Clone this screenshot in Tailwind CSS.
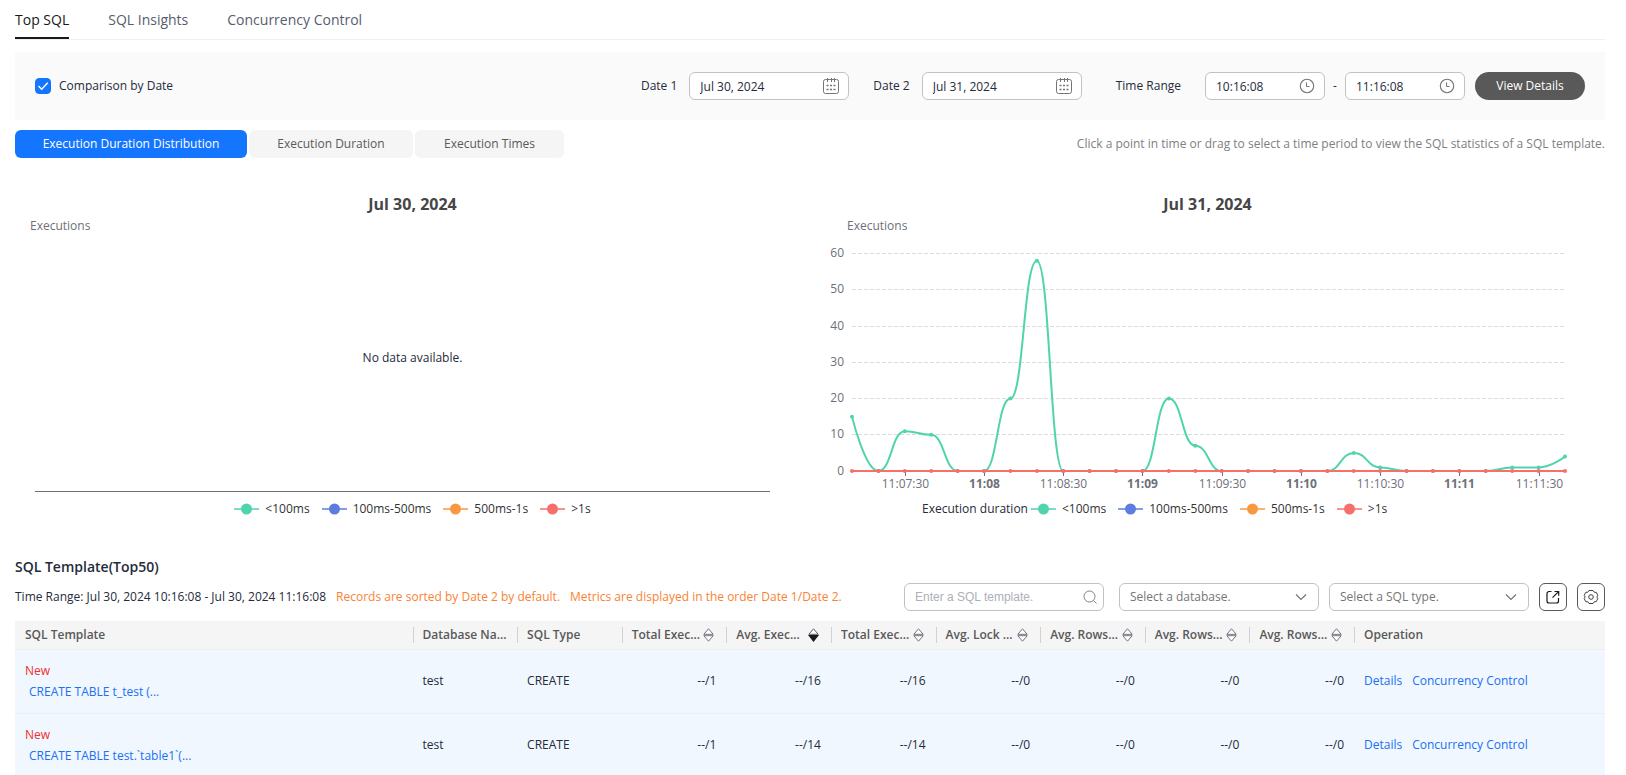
<!DOCTYPE html>
<html lang="en">

<head>
    <meta charset="utf-8">
    <meta name="viewport" content="width=device-width, initial-scale=1.0">
    <title>Top SQL</title>
    <script src="https://cdn.jsdelivr.net/npm/@tailwindcss/browser@4"></script>
</head>

<body class="bg-white pl-[15px] pr-[21px] font-['Open_Sans','Noto_Sans',sans-serif] text-xs text-[#252b3a]">

    <!-- icons -->
    <svg class="hidden">
        <symbol id="i-calendar" viewBox="0 0 16 16" fill="none" stroke="currentColor">
            <rect x="0.5" y="1.5" width="15" height="14" rx="2" />
            <path d="M4.500 0v4M8.500 0v4M11.500 0v4" />
            <path d="M3.500 7.500h2M7 7.500h2M10.500 7.500h2M3.500 11.500h2M7 11.500h2M10.500 11.500h2" stroke-width="1.300" />
        </symbol>
        <symbol id="i-clock" viewBox="0 0 16 16" fill="none" stroke="currentColor">
            <circle cx="8" cy="8" r="6.700" stroke-width="1.100" />
            <path d="M7.500 4.500v4h3" />
        </symbol>
        <symbol id="i-chevron" viewBox="0 0 12 8" fill="none" stroke="currentColor">
            <path d="M1 1.500l5 5 5-5" stroke-width="1.200" />
        </symbol>
        <symbol id="i-sort" viewBox="0 0 11 14">
            <path d="M5.500 .8L10.200 6.300H.8zM5.500 13.200L10.200 7.700H.8z" fill="#fff" stroke="#71757f" />
        </symbol>
        <symbol id="i-sort-desc" viewBox="0 0 11 14">
            <path d="M5.500 .8L10.200 6.300H.8z" fill="#fff" stroke="#575d6c" />
            <path d="M5.500 14L11 7H0z" fill="#191919" />
        </symbol>
    </svg>

    <nav class="flex h-10 gap-[39px] border-b border-[#f0f0f0] text-sm text-[#575d6c]">
        <a href="#" class="flex h-[39px] items-center border-b-2 border-[#191919] pt-0.5 text-[#191919]">Top SQL</a>
        <a href="#" class="flex h-[39px] items-center">SQL Insights</a>
        <a href="#" class="flex h-[39px] items-center">Concurrency Control</a>
    </nav>

    <!-- filter bar -->
    <form class="mt-3 flex h-[68px] items-center bg-[#fafafa] px-5">
        <label class="flex items-center gap-2">
            <span class="relative flex size-4">
                <input type="checkbox" checked class="size-4 appearance-none rounded border border-[#c2c2c2] checked:border-[#1476ff] checked:bg-[#1476ff]">
                <svg class="pointer-events-none absolute inset-0" viewBox="0 0 16 16" fill="none" stroke="#fff" stroke-width="1.4"><path d="M3.5 8l3.2 3.2 6-6.4" /></svg>
            </span>
            Comparison by Date
        </label>

        <div class="ml-auto flex items-center">
            <label for="date1" class="mr-3">Date 1</label>
            <span class="relative">
                <input id="date1" type="text" value="Jul 30, 2024" class="h-7 w-40 rounded-md border border-[#c2c2c2] bg-white px-2.5">
                <svg class="absolute top-1.5 right-2.5 size-4 text-[#757575]"><use href="#i-calendar" /></svg>
            </span>
            <label for="date2" class="mr-3 ml-6">Date 2</label>
            <span class="relative">
                <input id="date2" type="text" value="Jul 31, 2024" class="h-7 w-40 rounded-md border border-[#c2c2c2] bg-white px-2.5">
                <svg class="absolute top-1.5 right-2.5 size-4 text-[#757575]"><use href="#i-calendar" /></svg>
            </span>
            <label for="from" class="mr-6 ml-[34px]">Time Range</label>
            <span class="relative">
                <input id="from" type="text" value="10:16:08" class="h-7 w-[120px] rounded-md border border-[#c2c2c2] bg-white px-2.5">
                <svg class="absolute top-1.5 right-2.5 size-4 text-[#757575]"><use href="#i-clock" /></svg>
            </span>
            <span class="w-5 text-center">-</span>
            <span class="relative">
                <input id="to" aria-label="End time" type="text" value="11:16:08" class="h-7 w-[120px] rounded-md border border-[#c2c2c2] bg-white px-2.5">
                <svg class="absolute top-1.5 right-2.5 size-4 text-[#757575]"><use href="#i-clock" /></svg>
            </span>
            <button type="button" class="ml-2.5 h-7 w-[110px] rounded-full bg-[#595959] text-white">View Details</button>
        </div>
    </form>

    <div class="mt-2.5 flex items-center gap-0.5">
        <button class="h-7 w-[232px] rounded-md bg-[#1476ff] text-white">Execution Duration Distribution</button>
        <button class="h-7 w-[164px] rounded-md bg-[#f5f5f5] text-[#595959]">Execution Duration</button>
        <button class="h-7 w-[149px] rounded-md bg-[#f5f5f5] text-[#595959]">Execution Times</button>
        <p class="ml-auto text-[#808080]">Click a point in time or drag to select a time period to view the SQL statistics of a SQL template.</p>
    </div>

    <!-- charts -->
    <div class="mt-[34px] grid grid-cols-2">
        <section>
            <h3 class="text-center text-base leading-6 font-bold text-[#464646]">Jul 30, 2024</h3>
            <p class="pl-[15px] leading-5 text-[#6e7079]">Executions</p>
            <div class="flex h-[257px] flex-col">
                <p class="flex flex-1 items-center justify-center pb-3">No data available.</p>
                <div class="mr-10 mb-px ml-5 h-px bg-[#6e7079]"></div>
            </div>
            <div class="legend mt-1.5 flex h-5 items-center justify-center gap-3 text-[#333]"></div>
        </section>
        <section>
            <h3 class="text-center text-base leading-6 font-bold text-[#464646]">Jul 31, 2024</h3>
            <p class="pl-[37px] leading-5 text-[#6e7079]">Executions</p>
            <svg id="chart" class="block w-full" viewBox="0 0 795 257" font-size="12" fill="#6e7079"></svg>
            <div class="mt-1.5 flex h-5 items-center gap-[3px] pl-28">
                Execution duration
                <div class="legend flex items-center gap-3 text-[#333]"></div>
            </div>
        </section>
    </div>

    <h2 class="mt-[38px] text-sm font-semibold">SQL Template(Top50)</h2>

    <div class="mt-1.5 flex items-center gap-2.5">
        <p>Time Range: Jul 30, 2024 10:16:08 - Jul 30, 2024 11:16:08</p>
        <p class="text-[#fa8232]">Records are sorted by Date 2 by default.</p>
        <p class="text-[#fa8232]">Metrics are displayed in the order Date 1/Date 2.</p>
        <div class="ml-auto flex items-center gap-2.5">
            <span class="relative mr-[5px]">
                <input type="text" aria-label="SQL template" placeholder="Enter a SQL template." class="block h-7 w-[200px] rounded-md border border-[#c2c2c2] px-2.5 font-['Liberation_Sans',sans-serif] placeholder:text-[#adb0b8]">
                <svg class="absolute top-1.5 right-1.5 size-4 text-[#808080]" viewBox="0 0 16 16" fill="none" stroke="currentColor"><circle cx="7.5" cy="7.5" r="5.5" /><path d="M11.5 11.5l3 3" /></svg>
            </span>
            <span class="relative">
                <select aria-label="Database" class="block h-7 w-[200px] appearance-none rounded-md border border-[#c2c2c2] bg-white px-2.5 text-[#757575]">
                    <option>Select a database.</option>
                </select>
                <svg class="pointer-events-none absolute top-2.5 right-3 h-2 w-3 text-[#757575]"><use href="#i-chevron" /></svg>
            </span>
            <span class="relative">
                <select aria-label="SQL type" class="block h-7 w-[200px] appearance-none rounded-md border border-[#c2c2c2] bg-white px-2.5 text-[#757575]">
                    <option>Select a SQL type.</option>
                </select>
                <svg class="pointer-events-none absolute top-2.5 right-3 h-2 w-3 text-[#757575]"><use href="#i-chevron" /></svg>
            </span>
            <button aria-label="Export" class="flex size-7 items-center justify-center rounded-md border border-[#595959]">
                <svg class="size-4" viewBox="0 0 16 16" fill="none" stroke="#191919" stroke-width="1.200"><path d="M6.500 2.500H4a2 2 0 0 0-2 2V12a2 2 0 0 0 2 2h7.500a2 2 0 0 0 2-2V9M9.500 2.500h4.200v4.200M13.500 2.700L7.500 8.700" /></svg>
            </button>
            <button aria-label="Settings" class="flex size-7 items-center justify-center rounded-md border border-[#595959]">
                <svg class="size-4" viewBox="0 0 16 16" fill="none" stroke="#404040" stroke-linejoin="round"><path d="M6 1.500h4l1.200 1.700 2.100.2 1.500 3L13.800 8l1 1.600-1.500 3-2.100.2L10 14.500H6l-1.200-1.700-2.100-.2-1.500-3L2.200 8l-1-1.600 1.500-3 2.100-.2z" /><circle cx="8" cy="8" r="2.300" /></svg>
            </button>
        </div>
    </div>

    <table class="mt-2.5 w-full table-fixed">
        <colgroup>
            <col class="w-1/4">
            <col span="9">
            <col class="w-[251px]">
        </colgroup>
        <thead class="bg-[#f5f5f5] text-left text-[#595959]">
            <tr id="head" class="h-7 border-b border-[#ededed]"></tr>
        </thead>
        <tbody id="rows" class="bg-[#f0f7ff]"></tbody>
    </table>

    <script>
        // legends
        const series = [['#50d4ab', '&lt;100ms'], ['#5e7ce0', '100ms-500ms'], ['#fa9841', '500ms-1s'], ['#f66f6a', '&gt;1s']];
        document.querySelectorAll('.legend').forEach((el) => {
            el.innerHTML = series.map(([color, name]) => `
                <button class="flex items-center gap-1.5">
                    <svg width="25" height="14" fill="${color}"><path d="M0 7h25" stroke="${color}" stroke-width="2" opacity=".75"/><circle cx="12.5" cy="7" r="5.500"/></svg>${name}
                </button>`).join('');
        });

        // chart
        const data = [15, 0, 11, 10, 0, 0, 20, 58, 0, 0, 0, 0, 20, 7, 0, 0, 0, 0, 0, 5, 1, 0, 0, 0, 0, 1, 1, 4];
        const times = ['11:07:30', '11:08', '11:08:30', '11:09', '11:09:30', '11:10', '11:10:30', '11:11', '11:11:30'];
        const step = 713 / 27;
        const px = (i) => 42 + i * step;
        const py = (v) => 235 - v * 217.5 / 60;
        let svg = '';
        for (let v = 0; v <= 60; v += 10) {
            const y = Math.floor(py(v)) + 0.5;
            if (v) svg += `<path d="M42 ${y}H755" stroke="#dbdbdb" stroke-dasharray="4 2"/>`;
            svg += `<text x="34" y="${y + 3}" text-anchor="end">${v}</text>`;
        }
        times.forEach((t, i) => {
            const x = Math.round(px(2 + i * 3)) + 0.5;
            svg += `<path d="M${x} 235v5" stroke="#6e7079"/>`;
            svg += `<text x="${x}" y="252" text-anchor="middle" ${t.length < 6 ? 'font-weight="bold"' : ''}>${t}</text>`;
        });
        // horizontal tangents at every inner point
        let d = `M${px(0)} ${py(data[0])}`;
        for (let i = 1; i < data.length; i++) {
            const c1 = i === 1 ? px(0) : px(i - 1) + step / 2;
            const c2 = i === data.length - 1 ? px(i) : px(i) - step / 2;
            d += `C${c1} ${py(data[i - 1])} ${c2} ${py(data[i])} ${px(i)} ${py(data[i])}`;
        }
        svg += `<path d="${d}" fill="none" stroke="#50d4ab" stroke-width="2"/>`;
        svg += data.map((v, i) => `<circle cx="${px(i)}" cy="${py(v)}" r="2" fill="#50d4ab"/>`).join('');
        svg += '<path d="M42 235H755" stroke="#f66f6a" stroke-width="2"/>';
        svg += data.map((v, i) => `<circle cx="${px(i)}" cy="235" r="2" fill="#f66f6a"/>`).join('');
        document.getElementById('chart').innerHTML = svg;

        // table
        const cols = ['SQL Template', 'Database Na...', 'SQL Type', 'Total Exec...', 'Avg. Exec...', 'Total Exec...', 'Avg. Lock ...', 'Avg. Rows...', 'Avg. Rows...', 'Avg. Rows...', 'Operation'];
        document.getElementById('head').innerHTML = cols.map((c, i) => `
            <th class="p-0 font-semibold whitespace-nowrap">
                <div class="flex h-4 items-center justify-between pr-3 ${i ? 'border-l border-[#d1d1d1] pl-[9px]' : 'pl-2.5'}">${c}
                    ${i > 2 && i < 10 ? `<svg class="h-3.5 w-[11px] shrink-0"><use href="#${i === 4 ? 'i-sort-desc' : 'i-sort'}"/></svg>` : ''}
                </div>
            </th>`).join('');
        const rows = [
            ['CREATE TABLE t_test (...', 'test', 'CREATE', [1, 16, 16, 0, 0, 0, 0]],
            ['CREATE TABLE test.`table1`(...', 'test', 'CREATE', [1, 14, 14, 0, 0, 0, 0]],
        ];
        document.getElementById('rows').innerHTML = rows.map(([sql, db, type, nums]) => `
            <tr class="h-16 border-b border-[#ebeff5]">
                <td class="pl-2.5 leading-[21px]"><span class="text-[#f23030]">New</span><br><a href="#" class="ml-1 text-[#2070f3]">${sql}</a></td>
                <td class="pl-2.5">${db}</td>
                <td class="pl-2.5">${type}</td>
                ${nums.map((n) => `<td class="pr-2.5 text-right">--/${n}</td>`).join('')}
                <td class="pl-2.5 text-[#2070f3]"><a href="#" class="mr-2.5">Details</a><a href="#">Concurrency Control</a></td>
            </tr>`).join('');
    </script>
</body>
</html>
